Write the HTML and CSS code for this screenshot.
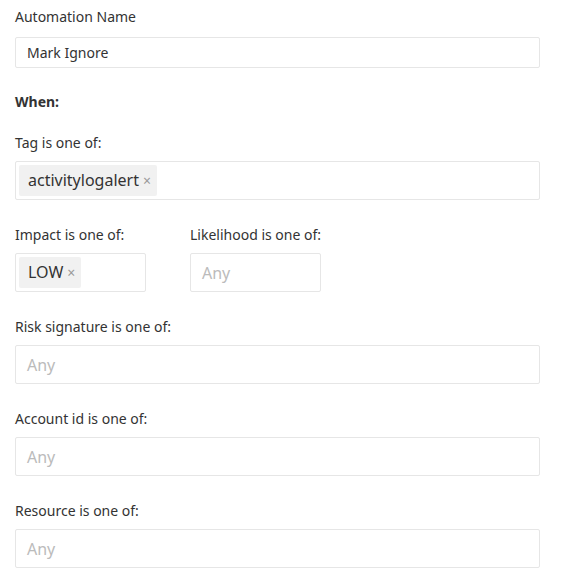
FILE: index.html
```html
<!DOCTYPE html>
<html>
<head>
<meta charset="utf-8">
<link rel="stylesheet" href="styles.css">
</head>
<body>
<div class="form">
  <div class="field first">
    <div class="label">Automation Name</div>
    <div class="text-input">Mark Ignore</div>
  </div>
  <div class="section-title">When:</div>
  <div class="field">
    <div class="label">Tag is one of:</div>
    <div class="multi wide"><span class="chip">activitylogalert<span class="x">×</span></span></div>
  </div>
  <div class="row">
    <div class="field">
      <div class="label">Impact is one of:</div>
      <div class="multi narrow"><span class="chip">LOW<span class="x">×</span></span></div>
    </div>
    <div class="field">
      <div class="label">Likelihood is one of:</div>
      <div class="multi narrow"><span class="placeholder">Any</span></div>
    </div>
  </div>
  <div class="field">
    <div class="label">Risk signature is one of:</div>
    <div class="multi wide"><span class="placeholder">Any</span></div>
  </div>
  <div class="field">
    <div class="label">Account id is one of:</div>
    <div class="multi wide"><span class="placeholder">Any</span></div>
  </div>
  <div class="field">
    <div class="label">Resource is one of:</div>
    <div class="multi wide"><span class="placeholder">Any</span></div>
  </div>
</div>
</body>
</html>
```
FILE: styles.css
```css
html, body {
  margin: 0;
  padding: 0;
  background: #ffffff;
}
body {
  font-family: "Noto Sans", "Open Sans", sans-serif;
  color: #333333;
}
.form {
  padding: 7px 0 0 15px;
  width: 525px;
}
.field {
  display: flex;
  flex-direction: column;
  align-items: flex-start;
  margin-bottom: 25px;
}
.field.first {
  margin-bottom: 24px;
}
.label {
  font-size: 14px;
  line-height: 20px;
  height: 20px;
  margin-bottom: 8px;
  color: #333;
  white-space: nowrap;
}
.field.first .label {
  margin-bottom: 10px;
}
.text-input {
  box-sizing: border-box;
  width: 525px;
  height: 31px;
  border: 1px solid #e6e6e6;
  border-radius: 2px;
  padding: 0 11px;
  font-size: 14px;
  line-height: 29px;
  color: #333;
}
.section-title {
  font-size: 14px;
  font-weight: bold;
  line-height: 20px;
  height: 20px;
  margin-bottom: 21px;
}
.multi {
  box-sizing: border-box;
  height: 39px;
  border: 1px solid #e6e6e6;
  border-radius: 2px;
  padding: 3px;
  display: flex;
  align-items: center;
}
.wide {
  width: 525px;
}
.narrow {
  width: 131px;
}
.row {
  display: flex;
  align-items: flex-start;
  gap: 44px;
}
.chip {
  display: inline-flex;
  align-items: center;
  box-sizing: border-box;
  height: 31px;
  background: #f1f1f1;
  border-radius: 2px;
  padding: 0 6px 0 9px;
  font-size: 16px;
  line-height: 31px;
  color: #333;
}
.x {
  color: #999;
  font-size: 14px;
  margin-left: 4px;
}
.placeholder {
  font-size: 16px;
  line-height: 20px;
  color: #bbbbbb;
  padding-left: 8px;
}
```
